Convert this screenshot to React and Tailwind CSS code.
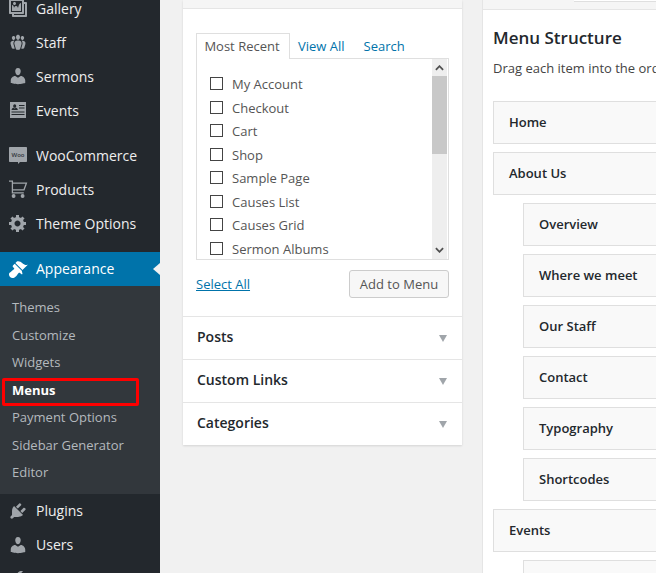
import React from 'react'

const Dash = ({ d, className = 'w-5 h-5 fill-[#a0a5aa]' }) => (
  <svg viewBox="0 0 20 20" className={className}>
    <path fillRule="evenodd" d={d} />
  </svg>
)

const paths = {
  gallery: 'M16 4h1.96c.57 0 1.04.47 1.04 1.04v12.92c0 .57-.47 1.04-1.04 1.04H5.04C4.47 19 4 18.53 4 17.96V16H2.04C1.47 16 1 15.53 1 14.96V2.04C1 1.47 1.47 1 2.04 1h12.92c.57 0 1.04.47 1.04 1.04V4zM3 14h11V3H3v11zm5-8.5C8 4.67 7.33 4 6.5 4S5 4.67 5 5.5 5.67 7 6.5 7 8 6.33 8 5.5zm2 4.5s1-5 3-5v8H4V7c2 0 2 3 2 3s.33-2 2-2 2 2 2 2zm7 7V6h-1v8.96c0 .57-.47 1.04-1.04 1.04H6v1h11z',
  groups: 'M8.03 4.46c-.29 1.28.55 3.46 1.97 3.46 1.41 0 2.25-2.18 1.96-3.46-.22-.98-1.08-1.63-1.96-1.63-.89 0-1.74.65-1.97 1.63zm-4.13.9c-.25 1.08.47 2.93 1.67 2.93s1.92-1.85 1.67-2.93c-.19-.83-.92-1.39-1.67-1.39s-1.48.56-1.67 1.39zm8.86 0c-.25 1.08.47 2.93 1.66 2.93 1.2 0 1.92-1.85 1.67-2.93-.19-.83-.92-1.39-1.67-1.39-.74 0-1.47.56-1.66 1.39zm-.59 11.43l1.25-4.3C14.2 10 12.71 8.47 10 8.47c-2.72 0-4.21 1.53-3.44 4.02l1.26 4.3C8.05 17.51 9 18 10 18c.98 0 1.94-.49 2.17-1.21zm-6.1-7.63c-.49.67-.96 1.83-.42 3.59l1.12 3.79c-.34.2-.77.31-1.2.31-.85 0-1.65-.41-1.85-1.03l-1.07-3.65c-.65-2.11.61-3.4 2.92-3.4.27 0 .54.02.79.06-.1.1-.2.22-.29.33zm8.35-.39c2.31 0 3.58 1.29 2.92 3.4l-1.07 3.65c-.2.62-1 1.03-1.85 1.03-.43 0-.86-.11-1.2-.31l1.11-3.77c.55-1.78.08-2.94-.42-3.61-.08-.11-.18-.23-.28-.33.25-.04.51-.06.79-.06z',
  user: 'M10 9.25c-2.27 0-2.73-3.44-2.73-3.44C7 4.02 7.82 2 9.97 2c2.16 0 2.98 2.02 2.71 3.81 0 0-.41 3.44-2.68 3.44zm0 2.57L12.72 10c2.39 0 4.52 2.33 4.52 4.53v2.49s-3.65 1.13-7.24 1.13c-3.65 0-7.24-1.13-7.24-1.13v-2.49c0-2.25 1.94-4.48 4.47-4.48z',
  gear: 'M18 12h-2.18c-.17.7-.44 1.35-.81 1.93l1.54 1.54-2.1 2.1-1.54-1.54c-.58.36-1.23.63-1.91.79V19H8v-2.18c-.68-.16-1.33-.43-1.91-.79l-1.54 1.54-2.12-2.12 1.54-1.54c-.36-.58-.63-1.23-.79-1.91H1V9.03h2.17c.16-.7.44-1.35.8-1.94L2.43 5.55l2.1-2.1 1.54 1.54c.58-.37 1.24-.64 1.93-.81V2h3v2.18c.68.16 1.33.43 1.91.79l1.54-1.54 2.12 2.12-1.54 1.54c.36.59.64 1.24.8 1.94H18V12zm-8.5 1.5c1.66 0 3-1.34 3-3s-1.34-3-3-3-3 1.34-3 3 1.34 3 3 3z',
  brush: 'M14.48 11.06L7.41 3.99l1.5-1.5c.5-.56 2.3-.47 3.51.32 1.21.8 1.43 1.28 2.91 2.1 1.18.64 2.45 1.26 4.45.85zm-.71.71L6.7 4.7 4.93 6.47c-.39.39-.39 1.02 0 1.41l1.06 1.06c.39.39.39 1.03 0 1.42-.6.6-1.43 1.11-2.21 1.69-.35.26-.7.53-1.01.84C1.43 13.23.99 14.48.99 15.5c0 .93.34 1.75 1.05 2.46.72.71 1.57 1.05 2.46 1.05 1.04 0 2.29-.45 3.61-1.78.31-.31.58-.66.84-1.01.58-.78 1.09-1.61 1.69-2.21.39-.39 1.03-.39 1.42 0l1.06 1.06c.39.39 1.02.39 1.41 0z',
  plug: 'M13.11 4.36L9.87 7.6 8 5.73l3.24-3.24c.35-.34 1.05-.2 1.56.32.52.51.66 1.21.31 1.55zm-8 1.77l.91-1.12 9.01 9.01-1.19.84c-.71.71-2.63 1.16-3.82 1.16H6.14L4.9 17.26c-.59.59-1.54.59-2.12 0-.59-.58-.59-1.53 0-2.12l1.24-1.24v-3.88c0-1.13.4-3.19 1.09-3.89zm7.26 3.97l3.24-3.24c.34-.35 1.04-.21 1.55.31.52.51.66 1.21.31 1.55l-3.24 3.25z',
  events: 'M2 2h16v16H2V2zm1.5 9.5v1h13v-1h-13zm0 2.5v1h13v-1h-13zm7.5-9v1h5.5V5H11zm0 2.5v1h5.5v-1H11zM6.7 4.2c-1.1 0-1.6 1-1.5 2 .1.9.7 1.6 1.5 1.6s1.4-.7 1.5-1.6c.1-1-.4-2-1.5-2zM3.6 10h6.2c0-1.4-.8-2-1.8-2.3l-1.3.7-1.3-.7c-1 .3-1.8.9-1.8 2.3z',
  wrench: 'M16.68 9.77c-1.34 1.34-3.3 1.67-4.95.99l-5.41 6.52c-.99.99-2.59.99-3.58 0s-.99-2.59 0-3.57l6.52-5.42c-.68-1.65-.35-3.61.99-4.95 1.28-1.28 3.12-1.62 4.72-1.06l-2.89 2.89 2.82 2.82 2.86-2.87c.53 1.58.18 3.39-1.08 4.65z',
}

const WooIcon = () => (
  <svg viewBox="0 0 20 20" className="w-5 h-5">
    <path d="M2 2h16c.6 0 1 .4 1 1v13c0 .6-.4 1-1 1h-6l-2 2v-2H2c-.6 0-1-.4-1-1V3c0-.6.4-1 1-1z" fill="#a0a5aa" />
    <text x="10" y="12" textAnchor="middle" fontSize="6" fontWeight="600" fill="#32373c">Woo</text>
  </svg>
)

const CartIcon = () => (
  <svg viewBox="0 0 20 20" className="w-5 h-5 fill-none stroke-[#a0a5aa]" strokeWidth="1.3">
    <path d="M1 2.2h3.4v11.6h11.4M4.4 4.2h14l-2.4 6.6H4.4" />
    <circle cx="5.6" cy="17" r="1.3" fill="#a0a5aa" />
    <circle cx="14.6" cy="17" r="1.3" fill="#a0a5aa" />
  </svg>
)

const NavItem = ({ icon, label, nudge }) => (
  <div className="h-[34px] flex items-center pl-[8px] text-[14px] text-[#eee]">
    <span className="w-[28px] flex justify-start">{icon}</span>
    <span className={nudge ? 'mb-[2px]' : ''}>{label}</span>
  </div>
)

const subItems = ['Themes', 'Customize', 'Widgets', 'Menus', 'Payment Options', 'Sidebar Generator', 'Editor']

const Sidebar = () => (
  <aside className="w-40 shrink-0 bg-[#23282d] -mt-[9px]">
    <NavItem icon={<Dash d={paths.gallery} />} label="Gallery" />
    <NavItem icon={<Dash d={paths.groups} />} label="Staff" />
    <NavItem icon={<Dash d={paths.user} />} label="Sermons" />
    <NavItem icon={<Dash d={paths.events} />} label="Events" />
    <div className="h-[11px]" />
    <NavItem icon={<WooIcon />} label="WooCommerce" />
    <NavItem icon={<CartIcon />} label="Products" />
    <NavItem icon={<Dash d={paths.gear} />} label="Theme Options" />
    <div className="h-[12px]" />

    {/* current menu */}
    <div className="relative h-[34px] flex items-center pl-[8px] bg-[#0073aa] text-[14px] text-white">
      <span className="w-[28px]">
        <Dash d={paths.brush} className="w-5 h-5 fill-white" />
      </span>
      <span className="mb-[2px]">Appearance</span>
      <span className="absolute right-0 top-[11px] border-y-[6px] border-r-[7px] border-y-transparent border-r-[#f1f1f1]" />
    </div>
    <div className="relative h-[208px] bg-[#32373c] pt-[8px] text-[13px] text-[#b4b9be]">
      {subItems.map((name) => (
        <div
          key={name}
          className={`h-[27.5px] flex items-center pl-[12px] ${name === 'Menus' ? 'font-bold text-white' : ''}`}
        >
          {name}
        </div>
      ))}
      {/* red annotation box */}
      <div className="absolute left-[2px] top-[92px] w-[137px] h-[28px] border-[3px] border-[#f00] rounded-[2px]" />
    </div>

    <NavItem icon={<Dash d={paths.plug} />} label="Plugins" nudge />
    <NavItem icon={<Dash d={paths.user} />} label="Users" nudge />
    <NavItem icon={<Dash d={paths.wrench} />} label="" />
  </aside>
)

const recent = ['My Account', 'Checkout', 'Cart', 'Shop', 'Sample Page', 'Causes List', 'Causes Grid', 'Sermon Albums']

const Chevron = ({ up }) => (
  <svg viewBox="0 0 10 6" className="w-[9px] h-[6px] fill-none stroke-[#505050]" strokeWidth="2">
    <path d={up ? 'M1 5l4-4 4 4' : 'M1 1l4 4 4-4'} />
  </svg>
)

const PagesBox = () => (
  <div className="h-[308px] pt-[24px] px-[13px] border-b border-[#e5e5e5]">
    <div className="flex items-start h-[25px] text-[13px] leading-none">
      <div className="relative z-10 h-[26px] w-[94px] pr-[2px] bg-white border border-b-0 border-[#dfdfdf] flex items-center justify-center text-[#555]">
        Most Recent
      </div>
      <a className="ml-[8px] h-[26px] flex items-center text-[#0073aa]">View All</a>
      <a className="ml-[19px] h-[26px] flex items-center text-[#0073aa]">Search</a>
    </div>
    <div className="h-[202px] border border-[#dfdfdf] flex overflow-hidden">
      <div className="flex-1 pt-[14px] pl-[13px] text-[13px] text-[#555]">
        {recent.map((name) => (
          <div key={name} className="h-[23.5px] flex items-center">
            <span className="w-[13px] h-[13px] mb-[2px] border border-[#444] mr-[9px]" />
            {name}
          </div>
        ))}
      </div>
      <div className="w-[15px] mr-px bg-[#eee] flex flex-col">
        <div className="h-[17px] flex items-center justify-center">
          <Chevron up />
        </div>
        <div className="h-[78px] bg-[#c8c8c8]" />
        <div className="flex-1 flex items-end justify-center pb-[6px]">
          <Chevron />
        </div>
      </div>
    </div>
    <div className="mt-[10px] flex items-center justify-between">
      <a className="mt-[2px] text-[13px] text-[#0073aa] underline">Select All</a>
      <button className="w-[100px] h-[28px] pt-[2px] bg-[#f7f7f7] border border-[#ccc] rounded-[3px] text-[13px] text-[#555]">
        Add to Menu
      </button>
    </div>
  </div>
)

const Accordion = ({ title }) => (
  <div className="h-[43px] last:h-[42px] px-[14px] flex items-center justify-between border-b border-[#e5e5e5] last:border-b-0 text-[14px] font-semibold text-[#23282d]">
    <span className="mb-[4px]">{title}</span>
    <span className="border-x-[4px] border-t-[7px] border-x-transparent border-t-[#a0a5aa] mr-[1px]" />
  </div>
)

const MenuItem = ({ title, sub }) => (
  <div
    className={`h-[43px] shrink-0 -mr-[40px] flex items-center pl-[15px] bg-[#f9f9f9] border border-[#dfdfdf] text-[13px] font-semibold text-[#23282d] ${sub ? 'ml-[30px]' : ''}`}
  >
    {title}
  </div>
)

const structure = [
  ['Home'],
  ['About Us'],
  ['Overview', true],
  ['Where we meet', true],
  ['Our Staff', true],
  ['Contact', true],
  ['Typography', true],
  ['Shortcodes', true],
  ['Events'],
  ['', true],
]

export default function App() {
  return (
    <div className="h-[573px] w-[656px] overflow-hidden flex bg-[#f1f1f1] font-['Open_Sans',sans-serif]">
      <Sidebar />
      <main className="flex-1 min-w-0 flex items-start gap-[20px] pl-[23px]">
        {/* left column */}
        <section className="w-[279px] shrink-0 bg-white shadow-[0_1px_2px_rgba(0,0,0,0.12)]">
          <div className="h-[9px] bg-[#f5f5f5] border-b border-[#e5e5e5]" />
          <PagesBox />
          <Accordion title="Posts" />
          <Accordion title="Custom Links" />
          <Accordion title="Categories" />
        </section>

        {/* right column */}
        <section className="flex-1 min-w-0 h-[573px] bg-white border-l border-[#e5e5e5] overflow-hidden">
          <div className="h-[10px] bg-[#f5f5f5] border-b border-[#e5e5e5] flex">
            <div className="ml-[91px] flex-1 h-[2px] bg-white border-b border-[#dfdfdf]" />
          </div>
          <div className="pl-[10px]">
            <h2 className="mt-[16px] text-[17px] leading-[24px] font-semibold text-[#23282d] whitespace-nowrap">
              Menu Structure
            </h2>
            <p className="mt-[9px] text-[13px] leading-[18px] text-[#444] whitespace-nowrap">
              Drag each item into the order you prefer.
            </p>
            <div className="mt-[24px] flex flex-col gap-[8px]">
              {structure.map(([title, sub], i) => (
                <MenuItem key={i} title={title} sub={sub} />
              ))}
            </div>
          </div>
        </section>
      </main>
    </div>
  )
}
